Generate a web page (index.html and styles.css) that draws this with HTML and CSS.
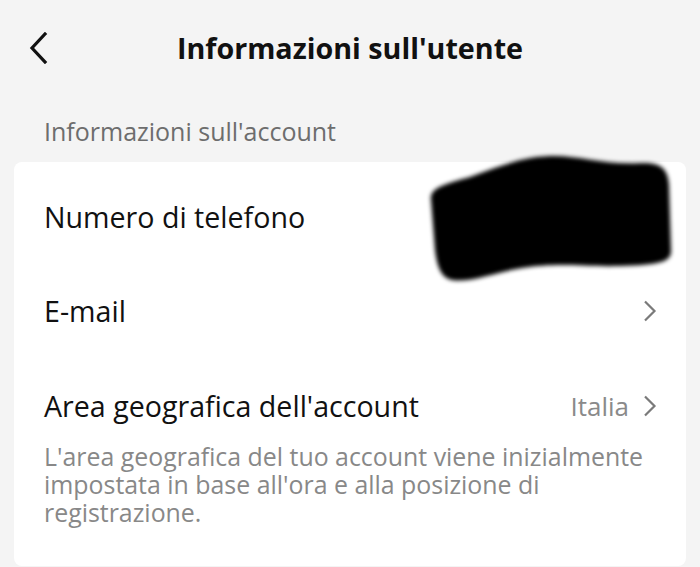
FILE: index.html
```html
<!DOCTYPE html>
<html lang="it">
<head>
<meta charset="utf-8">
<title>Informazioni sull'utente</title>
<link rel="stylesheet" href="styles.css">
</head>
<body>
<div class="page">
  <header class="topbar">
    <span class="back">
      <svg width="20" height="32" viewBox="0 0 20 32"><path d="M17 2 L4 16 L17 30" fill="none" stroke="#111" stroke-width="3.2" stroke-linecap="square" stroke-linejoin="miter"/></svg>
    </span>
    <h1 class="title">Informazioni sull'utente</h1>
  </header>
  <div class="section-label">Informazioni sull'account</div>
  <div class="card">
    <div class="row">
      <span class="row-label">Numero di telefono</span>
      <span class="row-value">
        <svg class="chev" width="14" height="22" viewBox="0 0 14 22"><path d="M2 1.5 L11.5 11 L2 20.5" fill="none" stroke="#7a7a7a" stroke-width="2.2"/></svg>
      </span>
    </div>
    <div class="row">
      <span class="row-label">E-mail</span>
      <span class="row-value">
        <svg class="chev" width="14" height="22" viewBox="0 0 14 22"><path d="M2 1.5 L11.5 11 L2 20.5" fill="none" stroke="#7a7a7a" stroke-width="2.2"/></svg>
      </span>
    </div>
    <div class="row-block">
      <div class="row-head">
        <span class="row-label">Area geografica dell'account</span>
        <span class="row-value"><span class="value-text">Italia</span>
          <svg class="chev" width="14" height="22" viewBox="0 0 14 22"><path d="M2 1.5 L11.5 11 L2 20.5" fill="none" stroke="#7a7a7a" stroke-width="2.2"/></svg>
        </span>
      </div>
      <p class="desc">L'area geografica del tuo account viene inizialmente impostata in base all'ora e alla posizione di registrazione.</p>
    </div>
  </div>
  <svg class="redact" width="700" height="567" viewBox="0 0 700 567">
    <defs><filter id="soft" x="-10%" y="-10%" width="120%" height="120%"><feGaussianBlur stdDeviation="2.2"/></filter></defs>
    <path filter="url(#soft)" fill="#000" d="M431,200 C429,188 445,184 470,177 C498,167 520,157 550,156 C578,155 604,165 640,163 C660,162 668,168 669,185 L671,250 C672,262 660,265 620,266 C582,267 560,262 522,268 C492,273 470,283 452,280 C441,278 437,266 435,250 Z"/>
  </svg>
</div>
</body>
</html>
```

FILE: styles.css
```css
* { box-sizing: border-box; }
html, body { margin: 0; padding: 0; }
body {
  background: #f4f4f4;
  font-family: "Open Sans", Roboto, "Liberation Sans", sans-serif;
  color: #111;
}
.page {
  position: relative;
  width: 700px;
  height: 567px;
  overflow: hidden;
}
.topbar {
  height: 95px;
  display: flex;
  align-items: center;
  justify-content: center;
  position: relative;
}
.back {
  position: absolute;
  left: 28px;
  top: 32px;
  width: 20px;
  height: 32px;
  display: flex;
}
.title {
  margin: 0;
  font-size: 28.7px;
  font-weight: 700;
  line-height: 36px;
  color: #111;
}
.section-label {
  padding: 21px 0 16px 44px;
  font-size: 25px;
  line-height: 30px;
  color: #6d6d6d;
}
.card {
  margin: 0 14px;
  background: #fff;
  border-radius: 8px;
  padding-top: 8px;
  height: 404px;
}
.row {
  height: 94px;
  display: flex;
  align-items: center;
  justify-content: space-between;
  padding: 0 29px 0 30px;
}
.row-label {
  font-size: 28.6px;
  font-weight: 500;
  line-height: 36px;
  color: #111;
}
.row-value {
  display: flex;
  align-items: center;
  gap: 14px;
}
.value-text {
  font-size: 26px;
  color: #8a8a8a;
  line-height: 36px;
}
.chev { display: block; }
.row-block {
  padding: 30px 29px 0 30px;
}
.row-head {
  display: flex;
  align-items: center;
  justify-content: space-between;
  height: 36px;
}
.desc {
  margin: 18px 0 0 0;
  font-size: 24.9px;
  line-height: 28px;
  color: #888;
}
.redact {
  position: absolute;
  left: 0;
  top: 0;
  pointer-events: none;
}
```
